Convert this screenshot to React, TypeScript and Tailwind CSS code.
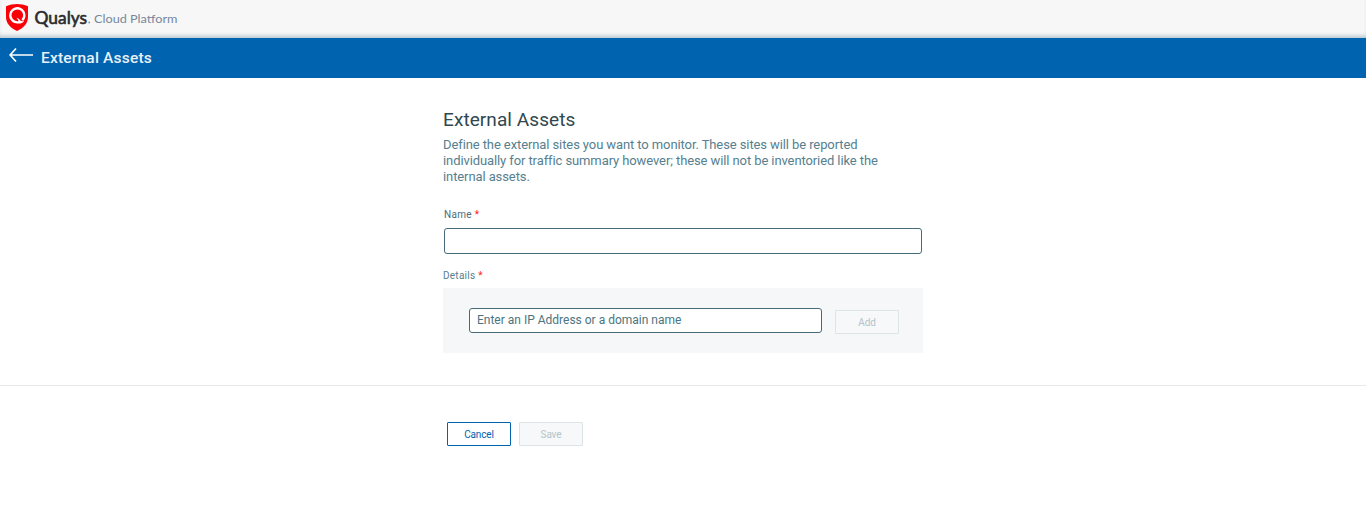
import React from "react";

function Logo() {
  return (
    <svg width="184" height="36" viewBox="0 0 184 36" role="img" aria-label="Qualys Cloud Platform">
      <path
        d="M17 4C20.5 4 24.3 4.8 28 6.3V17C28 23.5 23.5 28 17 31C10.500 28 6 23.500 6 17V6.300C9.700 4.800 13.500 4 17 4Z"
        fill="#fb0007"
      />
      <path
        d="M22.300 20.200A7 7 0 1 0 17.300 22.300"
        fill="none"
        stroke="#fff"
        strokeWidth="2.300"
      />
      <path
        d="M16.500 17.800C18.500 18 19.300 19.600 20.400 20.400C21.600 21.200 22.800 21.400 24.200 20.900C22.800 23.100 20.300 23.800 17 23.400L16.700 21.500L18.700 21.200C18.200 20 17.500 18.900 16.500 17.800Z"
        fill="#fff"
      />
      <text x="34.600" y="23.500" fontFamily="Lato, sans-serif" fontSize="17" fontWeight="400" fill="#2b2b2d" stroke="#2b2b2d" strokeWidth="0.600" textLength="52.500" lengthAdjust="spacingAndGlyphs">
        Qualys
      </text>
      <circle cx="89.200" cy="22.500" r="0.900" fill="#8a8f96" />
      <text x="94" y="23" fontFamily="Lato, sans-serif" fontSize="12" fill="#76879b" textLength="83.500" lengthAdjust="spacingAndGlyphs">
        Cloud Platform
      </text>
    </svg>
  );
}

function Required() {
  return <span className="ml-[3px] text-[#ff2020]">*</span>;
}

const buttonBase =
  "flex h-6 w-16 items-center justify-center rounded-[1px] border pt-px text-[10px] leading-none tracking-[-0.15px]";

export default function App() {
  return (
    <div className="min-h-[526px] w-full bg-white font-['Roboto',sans-serif]">
      <header className="h-[38px] bg-[#f7f7f7] shadow-[inset_0_-4px_4px_-2px_#b4c4cb]">
        <Logo />
      </header>
      <nav className="flex h-10 items-center bg-[#0063b0] pl-[9px] text-white">
        <button type="button" aria-label="Back" className="-mt-[6px]">
          <svg width="24" height="16" viewBox="0 0 24 16" fill="none" stroke="#fff" strokeWidth="1.700">
            <path d="M24 8H1M7 1.500L1.100 8L7 14.500" />
          </svg>
        </button>
        <span className="ml-2 text-[15.500px] font-medium leading-5 tracking-[0.200px] text-[#e8f1f8]">External Assets</span>
      </nav>

      <main className="mx-auto w-[480px] pt-[30px]">
        <h1 className="text-[19px] leading-6 tracking-[0.08px] text-[#30474f]">External Assets</h1>
        <p className="mt-[5px] text-[13px] leading-4 tracking-[-0.098px] text-[#56808f]">
          Define the external sites you want to monitor. These sites will be reported
          <br />
          individually for traffic summary however; these will not be inventoried like the
          <br />
          internal assets.
        </p>
        <label htmlFor="name" className="mt-6 ml-px block text-[10px] leading-3 tracking-[0.3px] text-[#4b6d7a]">
          Name
          <Required />
        </label>
        <input id="name" className="mt-[7px] ml-px block h-[26px] w-[478px] rounded-[3px] border border-[#456b78] bg-white px-2 text-xs outline-none" />
        <div className="mt-4 text-[10px] leading-3 tracking-[0.25px] text-[#56808f]">
          Details
          <Required />
        </div>
        <div className="mt-1.5 flex h-[65px] bg-[#f6f7f9] pt-5 pl-[26px]">
          <input
            placeholder="Enter an IP Address or a domain name"
            className="h-[25px] w-[353px] rounded-[3px] border border-[#456b78] bg-white px-[7px] pb-0.5 text-[12px] text-[#4b6d7a] outline-none placeholder:text-[#4b7480]"
          />
          <button type="button" disabled className={`${buttonBase} mt-0.5 ml-[13px] border-[#dce5e8] bg-[#f6f8f9] text-[#b3c3cb]`}>
            Add
          </button>
        </div>
      </main>

      <footer className="mt-8 border-t border-[#e6e8e9] pt-9">
        <div className="mx-auto flex w-[480px] gap-2 pl-1">
          <button type="button" className={`${buttonBase} border-[#0063b0] bg-white text-[#0063b0]`}>
            Cancel
          </button>
          <button type="button" disabled className={`${buttonBase} border-[#dce4e8] bg-[#f6f8f9] text-[#b3c3cb]`}>
            Save
          </button>
        </div>
      </footer>
    </div>
  );
}
